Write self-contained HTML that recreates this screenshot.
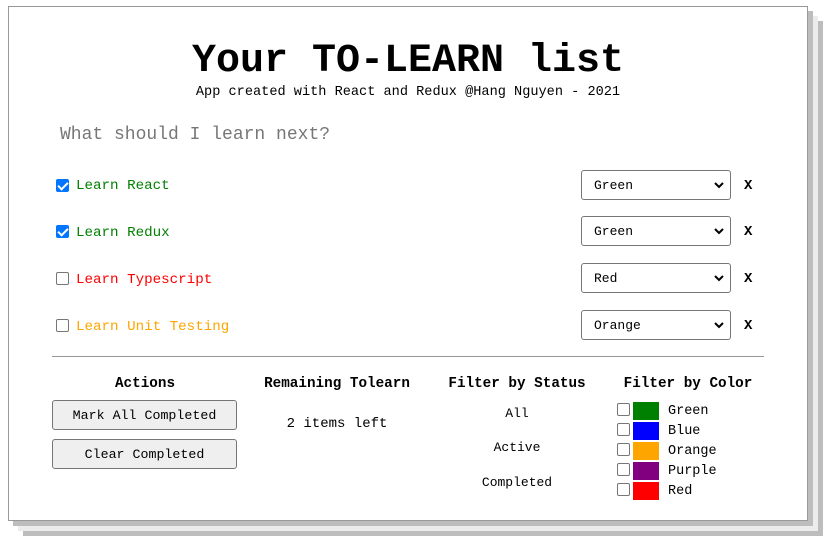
<!DOCTYPE html>
<html><head><style>
*{margin:0;padding:0;box-sizing:border-box}
body{width:833px;height:543px;background:#fff;font-family:"Liberation Mono",monospace;position:relative;overflow:hidden}
.card{position:absolute;left:8px;top:6px;width:800px;height:515px;border:1px solid #999;background:#fff;box-shadow:5px 5px 0 #bdbdbd,10px 10px 0 #ececec,15px 15px 0 #bdbdbd}
.a{position:absolute;white-space:nowrap}
.c{transform:translateX(-50%)}
.cb{position:absolute;width:13px;height:13px;border:1px solid #767676;border-radius:2px;background:#fff}
.cb.on{background:#0075ff;border-color:#0075ff}
.cb.on::after{content:"";position:absolute;left:3px;top:0px;width:4px;height:8px;border:solid #fff;border-width:0 2px 2px 0;transform:rotate(45deg)}
.sel{position:absolute;left:581px;width:150px;height:30px;border:1px solid #767676;border-radius:3px;font-size:13px;padding:7px 0 0 12px;background:#fff}
.sel svg{position:absolute;right:6px;top:11px}
.x{position:absolute;left:744px;font-size:14px;font-weight:bold}
.btn{position:absolute;left:52px;width:185px;height:30px;border:1px solid #767676;border-radius:3px;background:#efefef;font-size:13.3px;text-align:center;line-height:29px}
.h{font-size:14.3px;font-weight:bold}
.sw{position:absolute;left:633px;width:26px;height:18px}
.ct{position:absolute;left:668px;font-size:13.5px}
</style></head><body>
<div class="card"></div>
<div class="a c" style="left:408px;top:39px;font-size:40px;font-weight:bold;line-height:46px">Your TO-LEARN list</div>
<div class="a c" style="left:408px;top:85px;font-size:13.6px">App created with React and Redux @Hang Nguyen - 2021</div>
<div class="a" style="left:60px;top:125px;font-size:18px;color:#777">What should I learn next?</div>

<div class="cb on" style="left:56px;top:179px"></div>
<div class="a" style="left:76px;top:178px;font-size:14.2px;color:#008000">Learn React</div>
<div class="sel" style="top:170px">Green<svg width="10" height="7"><path d="M1 1L5 5L9 1" stroke="#000" stroke-width="2" fill="none"/></svg></div>
<div class="x" style="top:178px">X</div>

<div class="cb on" style="left:56px;top:225px"></div>
<div class="a" style="left:76px;top:225px;font-size:14.2px;color:#008000">Learn Redux</div>
<div class="sel" style="top:216px">Green<svg width="10" height="7"><path d="M1 1L5 5L9 1" stroke="#000" stroke-width="2" fill="none"/></svg></div>
<div class="x" style="top:224px">X</div>

<div class="cb" style="left:56px;top:272px"></div>
<div class="a" style="left:76px;top:272px;font-size:14.2px;color:#ff0000">Learn Typescript</div>
<div class="sel" style="top:263px">Red<svg width="10" height="7"><path d="M1 1L5 5L9 1" stroke="#000" stroke-width="2" fill="none"/></svg></div>
<div class="x" style="top:271px">X</div>

<div class="cb" style="left:56px;top:319px"></div>
<div class="a" style="left:76px;top:319px;font-size:14.2px;color:#ffa500">Learn Unit Testing</div>
<div class="sel" style="top:310px">Orange<svg width="10" height="7"><path d="M1 1L5 5L9 1" stroke="#000" stroke-width="2" fill="none"/></svg></div>
<div class="x" style="top:318px">X</div>

<div class="a" style="left:52px;top:356px;width:712px;height:1px;background:#999"></div>

<div class="a c h" style="left:145px;top:376px">Actions</div>
<div class="a c h" style="left:337px;top:376px">Remaining Tolearn</div>
<div class="a c h" style="left:517px;top:376px">Filter by Status</div>
<div class="a c h" style="left:688px;top:376px">Filter by Color</div>

<div class="btn" style="top:400px">Mark All Completed</div>
<div class="btn" style="top:439px">Clear Completed</div>
<div class="a c" style="left:337px;top:416px;font-size:14px">2 items left</div>

<div class="a c" style="left:517px;top:406px;font-size:13px">All</div>
<div class="a c" style="left:517px;top:440px;font-size:13px">Active</div>
<div class="a c" style="left:517px;top:475px;font-size:13px">Completed</div>

<div class="cb" style="left:617px;top:403px"></div><div class="sw" style="top:402px;background:#008000"></div><div class="ct" style="top:404px">Green</div>
<div class="cb" style="left:617px;top:423px"></div><div class="sw" style="top:422px;background:#0000ff"></div><div class="ct" style="top:424px">Blue</div>
<div class="cb" style="left:617px;top:443px"></div><div class="sw" style="top:442px;background:#ffa500"></div><div class="ct" style="top:444px">Orange</div>
<div class="cb" style="left:617px;top:463px"></div><div class="sw" style="top:462px;background:#800080"></div><div class="ct" style="top:464px">Purple</div>
<div class="cb" style="left:617px;top:483px"></div><div class="sw" style="top:482px;background:#ff0000"></div><div class="ct" style="top:484px">Red</div>
</body></html>
